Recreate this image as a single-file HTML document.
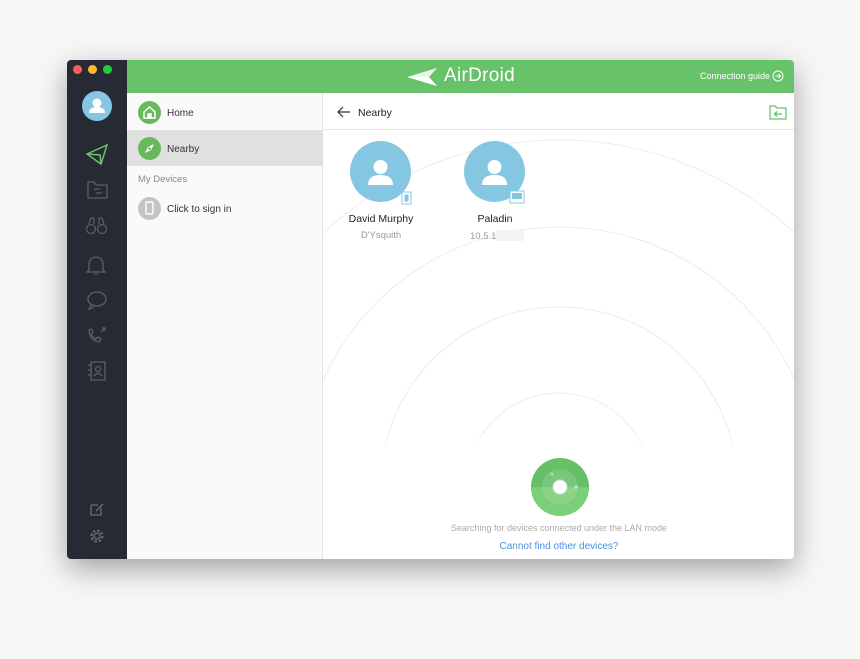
<!DOCTYPE html>
<html><head><style>
*{margin:0;padding:0;box-sizing:border-box}
body{width:860px;height:659px;background:#f7f7f7;font-family:"Liberation Sans",sans-serif;position:relative;overflow:hidden}
.win{position:absolute;left:67px;top:60px;width:727px;height:499px;background:#fff;box-shadow:0 10px 30px rgba(0,0,0,.35);border-radius:4px;overflow:hidden}
.side{position:absolute;left:0;top:0;width:60px;height:499px;background:#262a35}
.dot{position:absolute;top:5px;width:9px;height:9px;border-radius:50%}
.top{position:absolute;left:60px;top:0;right:0;height:33px;background:#68c26a}
.left{position:absolute;left:60px;top:33px;width:196px;bottom:0;background:#fafafa;border-right:1px solid #e4e4e4}
.item{position:absolute;left:0;width:196px;height:36px;font-size:10px;color:#333}
.ic{position:absolute;left:11px;top:7px;width:23px;height:23px;border-radius:50%;background:#68b95c}
.item span{position:absolute;left:40px;top:14px}
.right{position:absolute;left:257px;top:33px;right:0;bottom:0;overflow:hidden}
.av{position:absolute;width:61px;height:61px;border-radius:50%;background:#85c7e3}
.nm{position:absolute;font-size:10.5px;color:#222;text-align:center;width:120px}
.sub{position:absolute;font-size:9.5px;color:#999;text-align:center;width:120px}
</style></head><body>
<div class="win">
 <div class="side">
  <div class="dot" style="left:6px;background:#fc5f57"></div>
  <div class="dot" style="left:21px;background:#fdbc2e"></div>
  <div class="dot" style="left:36px;background:#28c840"></div>
  <div style="position:absolute;left:15px;top:31px;width:30px;height:30px;border-radius:50%;background:#85c7e3"></div>
  <svg style="position:absolute;left:15px;top:31px" width="30" height="30"><circle cx="15" cy="12" r="4.5" fill="#fff"/><path d="M7 22 Q7 16 15 16 Q23 16 23 22 Z" fill="#fff"/></svg>
  <svg width="60" height="499" style="position:absolute;left:0;top:0" fill="none" stroke="#5a5e69" stroke-width="1.3">
   <path d="M20 94 L40 85 L34 104 Z M20 94 L33 95 L34 104" stroke="#68c26a" stroke-width="1.5"/>
   <path d="M21 122 h6 l2 3 h11 v13 h-19 z"/><path d="M27 129 h6 M29 133 h6"/>
   <circle cx="24" cy="169" r="4.5"/><circle cx="35" cy="169" r="4.5"/><path d="M22 164 l2 -6 h3 v6 M37 164 l-2 -6 h-3 v6"/>
   <path d="M22 210 v-6 a7 7 0 0 1 14 0 v6 l2 2 h-18 z M27 214 h4"/>
   <ellipse cx="30" cy="239" rx="9" ry="7"/><path d="M24 245 l-2 4 l5 -2"/>
   <path d="M22 270 q0 10 10 12 l2 -3 l-3 -2 l-2 2 q-4 -2 -5 -5 l2 -2 l-2 -3 z M34 272 l4 -4 M35 268 h3 v3"/>
   <rect x="24" y="302" width="14" height="18"/><circle cx="31" cy="309" r="2.5"/><path d="M27 316 q4 -5 8 0 M21 305 h4 M21 310 h4 M21 315 h4"/>
   <path d="M24 445 h7 M24 445 v10 h10 v-7 M29 451 l7 -7" stroke="#6a6e79"/>
   <circle cx="30" cy="476" r="3" stroke="#6a6e79"/><circle cx="30" cy="476" r="5.5" stroke="#6a6e79" stroke-dasharray="2.5 1.8" stroke-width="2"/>
  </svg>
 </div>
 <div class="top">
  <svg style="position:absolute;left:280px;top:6px" width="36" height="22"><path d="M0 11 L30 2 L22 11 L30 20 Z" fill="#e8f6e8"/><path d="M0 11 L22 11 L30 20 Z" fill="#fff"/></svg>
  <div style="position:absolute;left:317px;top:5px;color:#fff;font-size:19px;letter-spacing:.3px">AirDroid</div>
  <div style="position:absolute;left:573px;top:11px;width:90px;color:#fff;font-size:9px;white-space:nowrap">Connection guide</div>
  <svg style="position:absolute;left:645px;top:10px" width="12" height="12" fill="none" stroke="#fff" stroke-width="1"><circle cx="6" cy="6" r="5"/><path d="M3.5 6 h5 M6.5 4 l2 2 l-2 2"/></svg>
 </div>
 <div class="left">
  <div class="item" style="top:1px"><div class="ic"></div><svg style="position:absolute;left:11px;top:7px" width="23" height="23" fill="none" stroke="#fff" stroke-width="1.5"><path d="M6 11 L11.5 6 L17 11 V17 H6 Z"/><rect x="10" y="13" width="3" height="4" fill="#fff"/></svg><span>Home</span></div>
  <div class="item" style="top:37px;background:#e0e0e0"><div class="ic"></div><svg style="position:absolute;left:11px;top:7px" width="23" height="23"><path d="M16 7 L13 13 L7 16 L10 10 Z" fill="#fff"/><circle cx="11.5" cy="11.5" r="1.3" fill="#68b95c"/></svg><span>Nearby</span></div>
  <div style="position:absolute;left:11px;top:81px;font-size:9.5px;color:#888">My Devices</div>
  <div class="item" style="top:97px"><div class="ic" style="background:#c4c4c4"></div><svg style="position:absolute;left:11px;top:7px" width="23" height="23"><rect x="8" y="5" width="7" height="12" rx="1" fill="none" stroke="#fff" stroke-width="1.4"/></svg><span>Click to sign in</span></div>
 </div>
 <div class="right">
  <svg width="470" height="466" style="position:absolute;left:0;top:0" fill="none" stroke="#ececec" stroke-width="1">
   <circle cx="235" cy="392" r="92"/><circle cx="235" cy="392" r="178"/><circle cx="235" cy="392" r="258"/><circle cx="235" cy="392" r="345"/>
  </svg>
  <div style="position:absolute;left:0;top:0;right:0;height:37px;background:#fff;border-bottom:1px solid #e6e6e6"></div>
  <div style="position:absolute;left:0;top:340px;right:0;height:130px;background:linear-gradient(rgba(255,255,255,0),#fff 14%)"></div>
  <svg style="position:absolute;left:13px;top:13px" width="14" height="12" fill="none" stroke="#333" stroke-width="1.2"><path d="M13 6 H1 M6 1 L1 6 L6 11"/></svg>
  <div style="position:absolute;left:34px;top:14px;font-size:10.5px;color:#222">Nearby</div>
  <svg style="position:absolute;left:445px;top:12px" width="18" height="15" fill="none" stroke="#68c26a" stroke-width="1.3"><path d="M1 1 h5 l2 2 h9 v11 h-16 z M13 9 h-7 M8 6.5 l-2.5 2.5 l2.5 2.5"/></svg>
  <div class="av" style="left:26px;top:48px"></div>
  <svg style="position:absolute;left:26px;top:48px" width="70" height="65"><circle cx="30.5" cy="26" r="7" fill="#fff"/><path d="M18 44 Q18 34 30.5 34 Q43 34 43 44 Z" fill="#fff"/><rect x="52" y="51" width="9" height="12" fill="#fff" stroke="#85c7e3"/><rect x="54.5" y="53.5" width="4" height="7" fill="#85c7e3"/></svg>
  <div class="av" style="left:140px;top:48px"></div>
  <svg style="position:absolute;left:140px;top:48px" width="70" height="65"><circle cx="30.5" cy="26" r="7" fill="#fff"/><path d="M18 44 Q18 34 30.5 34 Q43 34 43 44 Z" fill="#fff"/><rect x="46" y="50" width="14" height="12" fill="#fff" stroke="#85c7e3"/><rect x="48" y="52" width="10" height="6" fill="#85c7e3"/></svg>
  <div class="nm" style="left:-3px;top:120px">David Murphy</div>
  <div class="sub" style="left:-3px;top:137px">D'Ysquith</div>
  <div class="nm" style="left:111px;top:120px">Paladin</div>
  <div class="sub" style="left:96px;top:137px;text-align:left;padding-left:50px">10.5.1<span style="display:inline-block;width:28px;height:11px;background:#f3f3f3;vertical-align:-2px"></span></div>
  <svg style="position:absolute;left:206px;top:364px" width="60" height="60"><circle cx="30" cy="30" r="29" fill="#67c068"/><path d="M1 30 A29 29 0 0 0 59 30 L30 30 Z" fill="#7fd27c" opacity=".8"/><circle cx="30" cy="30" r="18" fill="#fff" opacity=".12"/><circle cx="30" cy="30" r="7" fill="#fff" stroke="#ddd"/><circle cx="22" cy="17" r="1.5" fill="#fff" opacity=".4"/><circle cx="46" cy="30" r="2" fill="#fff" opacity=".4"/></svg>
  <div style="position:absolute;left:0;right:0;top:430px;text-align:center;font-size:9px;color:#aaa">Searching for devices connected under the LAN mode</div>
  <div style="position:absolute;left:0;right:0;top:448px;text-align:center;font-size:10px;color:#4a90e2">Cannot find other devices?</div>
 </div>
</div>
</body></html>
